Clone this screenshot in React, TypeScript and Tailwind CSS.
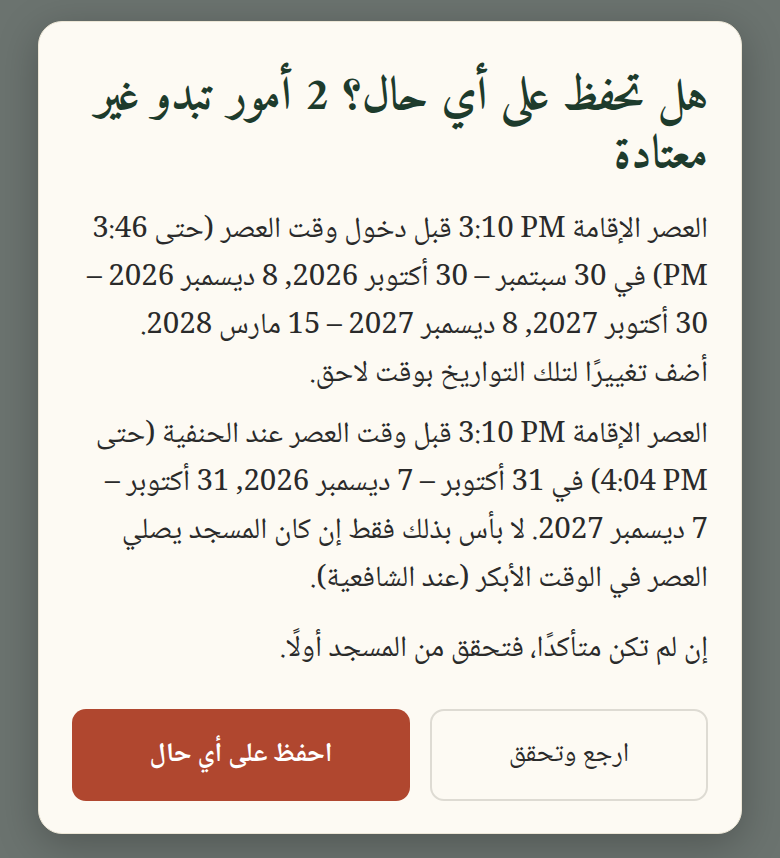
import React from "react";

const N = "\u00a0";

export default function App() {
  return (
    <div className="min-h-[858px] w-full bg-[#6b736f] flex items-start justify-center pt-[21px]">
      <div
        dir="rtl"
        className="w-[704px] rounded-[24px] bg-[#fdfaf3] border border-[#ece6d6] px-[33px] pt-[47px] pb-[32px] shadow-[0_10px_40px_rgba(0,0,0,0.25)]"
        style={{ fontFamily: '"Noto Naskh Arabic", serif' }}
      >
        <h1
          className="text-[#1d3b2c] font-bold text-[46px] leading-[58px]"
          style={{ fontFamily: 'Amiri, "Noto Naskh Arabic", serif' }}
        >
          هل تحفظ على أي حال؟ 2 أمور تبدو غير معتادة
        </h1>
        <div className="mt-[22px] text-[#2a2a2a] text-[29.5px] leading-[48px]">
          <div className="mb-[13px]">
            <p>
              العصر الإقامة <bdi>3:10 PM</bdi> قبل دخول وقت العصر (حتى <bdi>3:46 PM</bdi>) في {`30${N}سبتمبر`} – {`30${N}أكتوبر`} 2026, {`8${N}ديسمبر`} 2026 – {`30${N}أكتوبر`} 2027, {`8${N}ديسمبر`} 2027 – {`15${N}مارس`} 2028.
            </p>
            <p>أضف تغييرًا لتلك التواريخ بوقت لاحق.</p>
          </div>
          <div className="mb-[22px]">
            <p>
              العصر الإقامة <bdi>3:10 PM</bdi> قبل وقت العصر عند الحنفية (حتى <bdi>4:04 PM</bdi>) في {`31${N}أكتوبر`} – {`7${N}ديسمبر`} 2026, {`31${N}أكتوبر`} – {`7${N}ديسمبر`} 2027. لا بأس بذلك فقط إن كان المسجد يصلي العصر في الوقت الأبكر (عند الشافعية).
            </p>
          </div>
          <p>إن لم تكن متأكدًا، فتحقق من المسجد أولًا.</p>
        </div>
        <div className="mt-[35px] flex gap-[20px]">
          <button className="w-[278px] h-[92px] rounded-[14px] border-2 border-[#dedbd3] bg-[#fdfaf3] text-[#2a2a2a] text-[27px]">
            ارجع وتحقق
          </button>
          <button className="flex-1 h-[92px] rounded-[14px] bg-[#b0472f] text-white text-[27px] font-bold">
            احفظ على أي حال
          </button>
        </div>
      </div>
    </div>
  );
}
